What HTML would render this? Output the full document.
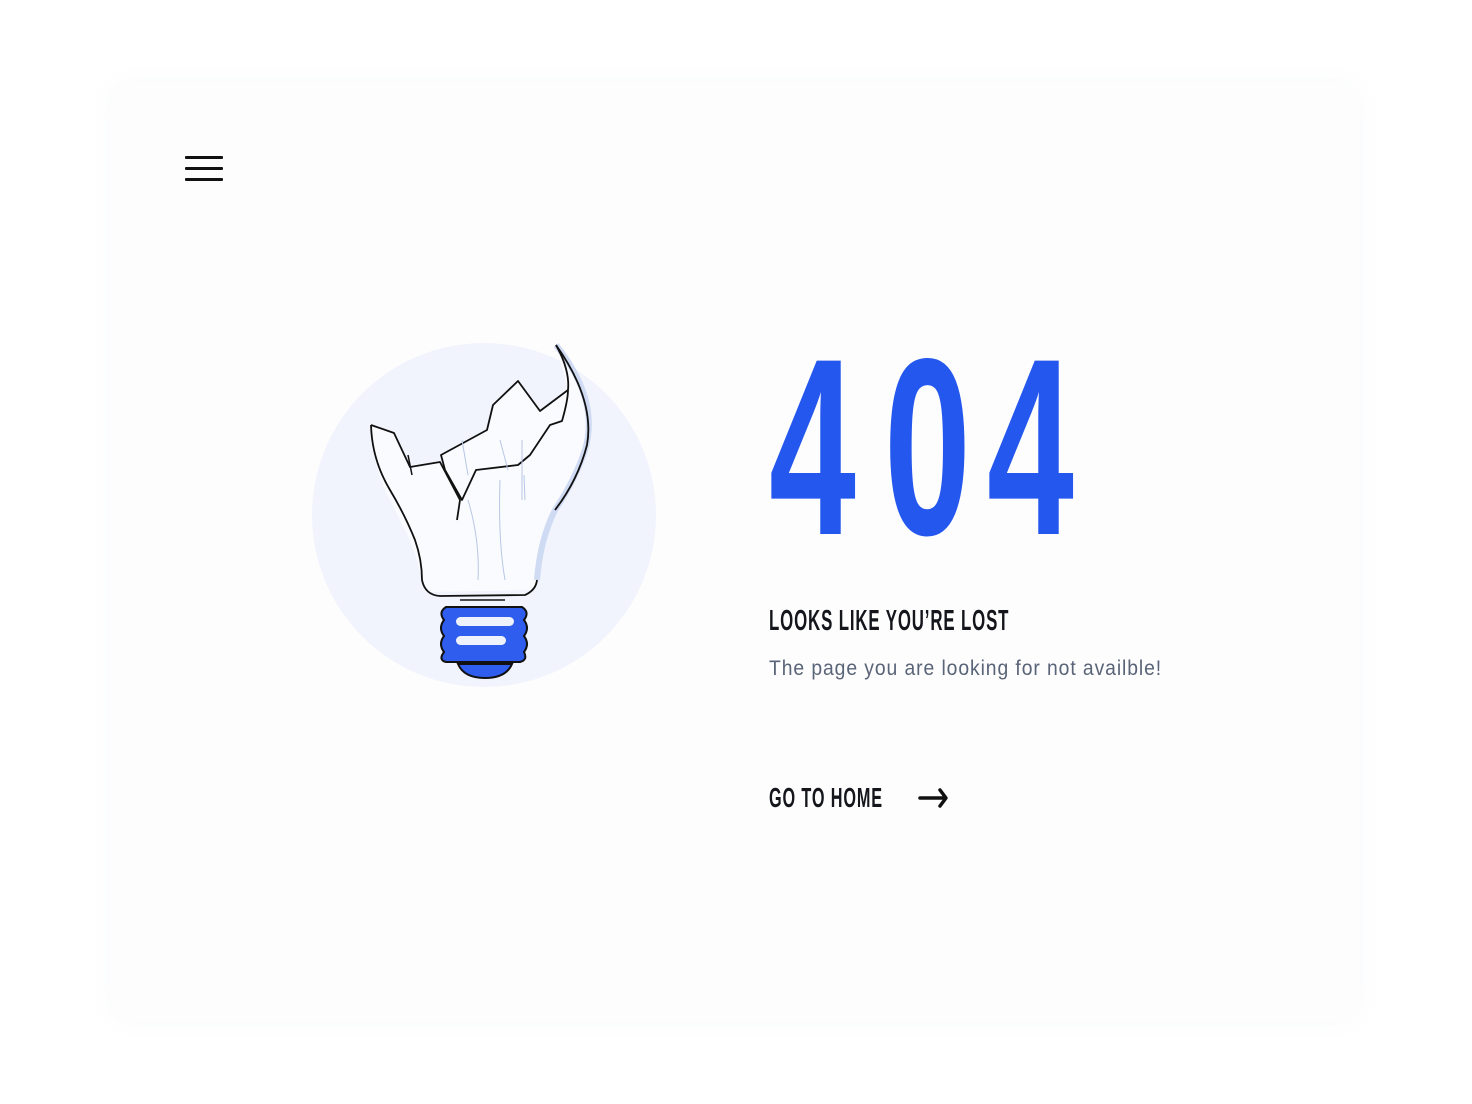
<!DOCTYPE html>
<html><head><meta charset="utf-8"><style>
html,body{margin:0;padding:0;width:1472px;height:1104px;background:#fff;overflow:hidden;font-family:"Liberation Sans",sans-serif}
.card{position:absolute;left:110px;top:82px;width:1250px;height:940px;background:#fdfdfe;border-radius:24px;box-shadow:0 0 18px rgba(200,205,220,0.12)}
.ham{position:absolute;left:185px;width:38px;height:3px;background:#111;border-radius:1px}
.d{position:absolute;top:322px;font-size:252px;font-weight:bold;color:#2457ee;line-height:1;transform-origin:0 0;transform:scaleX(0.62)}
.t{position:absolute;left:769px;white-space:nowrap;transform-origin:0 0}
</style></head><body>
<div class="card"></div>
<div class="ham" style="top:156px"></div>
<div class="ham" style="top:167px"></div>
<div class="ham" style="top:178px"></div>

<svg width="1472" height="1104" style="position:absolute;left:0;top:0">
<circle cx="484" cy="515" r="172" fill="#f1f4fc"/>
<path d="M556 345 Q600 400 585 450 Q575 480 555 510 Q540 540 537 580 L535 590 L425 592 Q418 560 410 540 Q395 510 385 490 Q372 460 371 425 L394 433 L410 465 L440 462 L487 430 L493 405 L518 381 L540 411 L568 390 Z" fill="#fafbfe"/>
<path d="M556 345 Q600 400 585 450 Q575 480 555 510 Q540 540 537 580" fill="none" stroke="#cfdaf3" stroke-width="6"/>
<path d="M556 345 Q595 400 587 445 Q578 480 555 510" fill="none" stroke="#111" stroke-width="1.8"/>
<path d="M556 345 Q570 370 568 390" fill="none" stroke="#111" stroke-width="1.8"/>
<path d="M568 390 L540 411 L518 381 L493 405 L487 430 L441 455 L445 470 L462 500 L476 470 L518 465 L530 455 L550 425 L562 421 Q568 400 568 390" fill="#fafbfe" stroke="#111" stroke-width="1.8" stroke-linejoin="round"/>
<path d="M371 425 L394 433 L410 467 L440 462 L460 500 L457 520" fill="none" stroke="#111" stroke-width="1.8" stroke-linejoin="round"/>
<path d="M371 425 Q372 460 390 490 Q405 515 415 540 Q422 560 422 580 Q425 595 440 596 L525 595 Q536 590 537 580" fill="none" stroke="#111" stroke-width="1.8"/>
<path d="M462 440 L468 475 M500 440 L508 470 M522 440 L522 500 M468 500 Q480 540 478 580 M500 480 Q498 540 505 580 M524 475 L525 500" stroke="#b8c6e6" stroke-width="1" fill="none"/>
<path d="M408 455 L412 475" stroke="#111" stroke-width="1.5"/>
<path d="M460 600 L505 600" stroke="#111" stroke-width="1.5"/>
<path d="M446 607 L522 607 Q530 612 524 620 Q530 628 524 636 Q530 644 524 652 Q528 660 520 662 L446 662 Q438 660 444 652 Q438 644 444 636 Q438 628 444 620 Q438 612 446 607 Z" fill="#2f5ded" stroke="#111" stroke-width="2"/>
<rect x="456" y="617" width="58" height="9" rx="4.5" fill="#eef2fd"/>
<rect x="456" y="636" width="50" height="9" rx="4.5" fill="#eef2fd"/>
<path d="M458 664 L512 664 Q506 678 485 678 Q464 678 458 664 Z" fill="#2f5ded" stroke="#111" stroke-width="2"/>
<path d="M940 790 L946 798 L940 806 M920 798 L945 798" stroke="#111" stroke-width="3.5" fill="none" stroke-linecap="round" stroke-linejoin="round"/>
</svg>

<div class="d" style="left:769px">4</div>
<div class="d" style="left:884px">0</div>
<div class="d" style="left:987px">4</div>

<div class="t" style="top:605px;font-size:29px;font-weight:bold;color:#14161c;letter-spacing:1.5px;transform:scaleX(0.58)">LOOKS LIKE YOU’RE LOST</div>
<div class="t" style="top:657px;font-size:21px;color:#5a6478;letter-spacing:1px;transform:scaleX(0.92)">The page you are looking for not availble!</div>
<div class="t" style="top:782px;font-size:28px;font-weight:bold;color:#14161c;letter-spacing:1.5px;transform:scaleX(0.58)">GO TO HOME</div>
</body></html>
